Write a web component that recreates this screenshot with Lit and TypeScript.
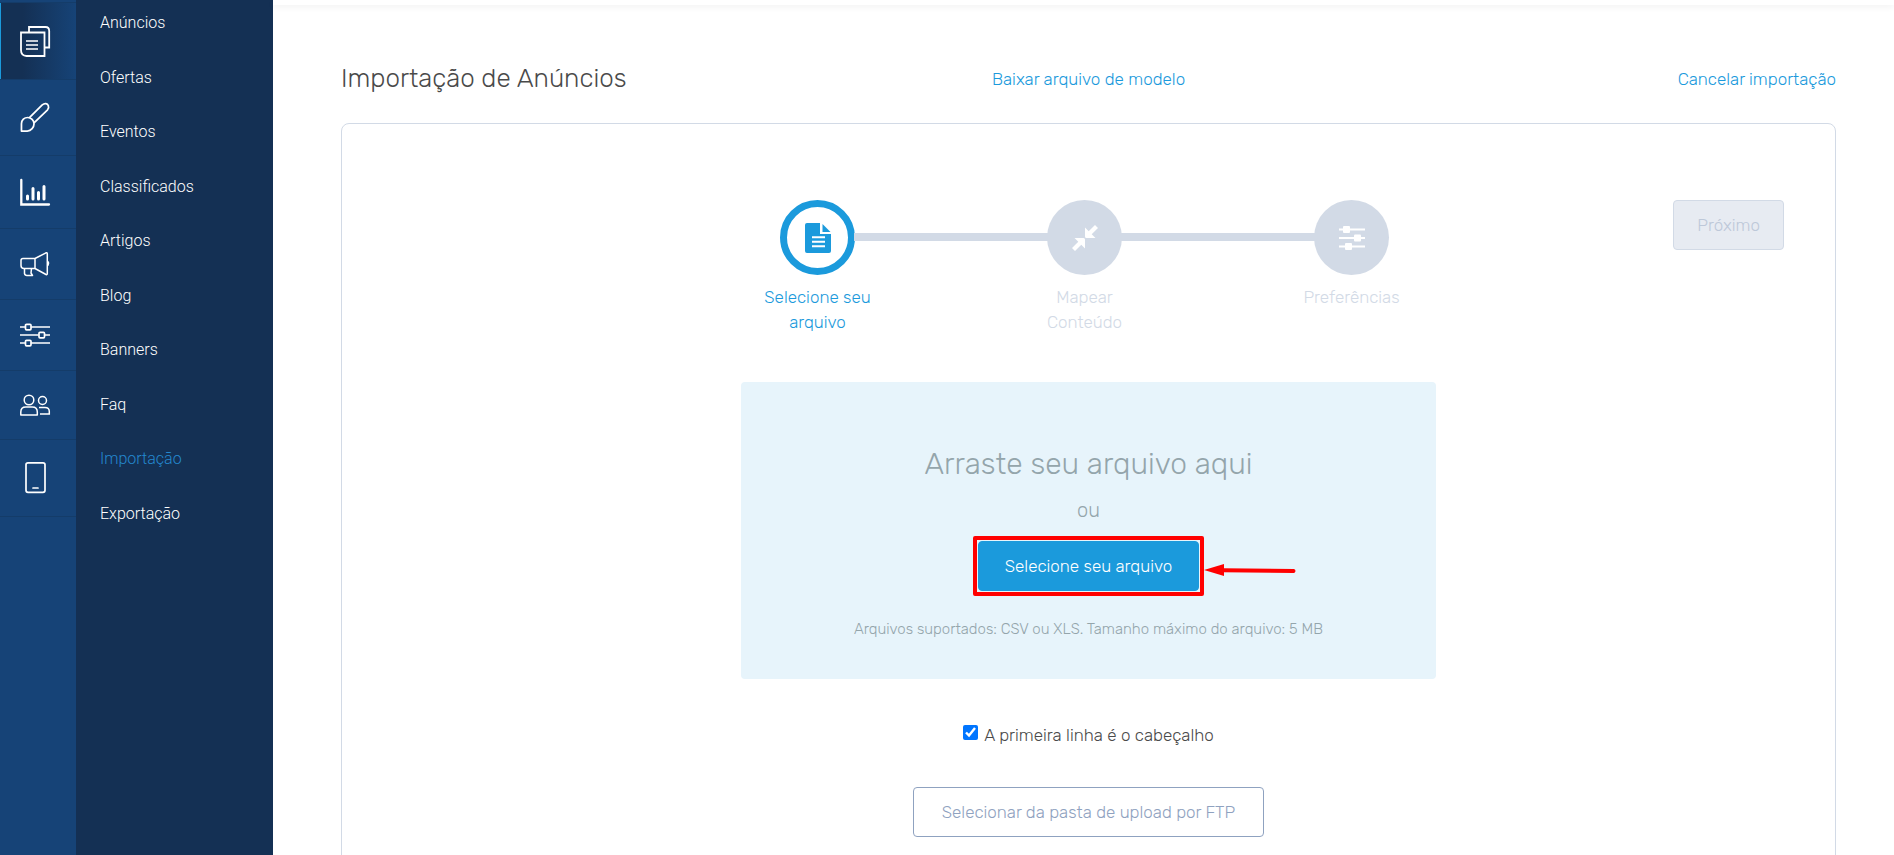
import { LitElement, html, css, svg, nothing } from "lit";
import { customElement, state } from "lit/decorators.js";

const icons = {
  content: svg`<svg width="30" height="30" viewBox="0 0 30 30" fill="none" stroke="currentColor" stroke-width="1.8">
    <path d="M1 6.5h23.500v23.500H6.500Q1 30 1 24z"/><path d="M9 6.500V1h16.500Q29.200 1 29.200 5v16.500h-5" />
    <path d="M6 15h12M6 19h12M6 23h12" stroke-width="1.500"/></svg>`,
  design: svg`<svg width="30" height="29" viewBox="0 0 30 30" fill="none" stroke="currentColor" stroke-width="1.8" stroke-linejoin="round">
    <path d="M1 29v-7.500C1 17.500 4 15 7.500 15S14 18 14 21.500 11 29 7 29z"/>
    <path d="M9 15.500 22.500 2C25 -.2 28 .5 28.700 2.500c.8 2 .2 3.500-.7 4.500L14 20.500"/></svg>`,
  stats: svg`<svg width="30" height="26" viewBox="0 0 30 26" fill="none" stroke="currentColor" stroke-linecap="round">
    <path d="M1.300 1v24.500H29" stroke-width="2.300"/><path d="M7.500 17v3M13 9.500v10.500M18.500 13.500v6.500M24 7.500v12.500" stroke-width="3"/></svg>`,
  promote: svg`<svg width="30" height="24" viewBox="0 0 30 24" fill="none" stroke="currentColor" stroke-width="1.500" stroke-linejoin="round">
    <path d="M15 6.500H3Q1 6.500 1 8.500v5Q1 16.500 4 16.500h11zM15 6.500 26 .8Q27.300.3 27.300 2v19.500q0 1.500-1.300 1L15 16.500"/>
    <path d="M4.500 17v4.500q.5 2.500 3 2h5l-1.500-2.500.5-4.500M28 9.500q1.500 2 0 4"/></svg>`,
  settings: svg`<svg width="30" height="24" viewBox="0 0 30 24" fill="none" stroke="currentColor" stroke-width="1.700">
    <path d="M0 4h5M11 4h19M0 12h18.500M24.500 12H30M0 20h5M11 20h19"/>
    <rect x="5.500" y="1.300" width="5.500" height="5.500" rx="1"/><rect x="19" y="9.300" width="5.500" height="5.500" rx="1"/><rect x="5.500" y="17.300" width="5.500" height="5.500" rx="1"/></svg>`,
  users: svg`<svg width="30" height="22" viewBox="0 0 30 22" fill="none" stroke="currentColor" stroke-width="1.500">
    <circle cx="9" cy="6" r="4.800"/><path d="M.8 21v-3q0-5 5-5h6.500q5 0 5 5v3z" stroke-linejoin="round"/>
    <circle cx="22.500" cy="6.500" r="4"/><path d="M19 13.500h6q4.300 0 4.300 4V20H20"/></svg>`,
  mobile: svg`<svg width="30" height="30" viewBox="0 0 30 30" fill="none" stroke="currentColor" stroke-width="1.700">
    <rect x="6" y="-.2" width="19" height="29.500" rx="2"/><path d="M13 25h5" stroke-linecap="round"/></svg>`,
  file: svg`<svg width="26" height="30" viewBox="0 0 26 30" fill="currentColor">
    <path d="M2 0h13v11h11v17q0 2-2 2H2q-2 0-2-2V2Q0 0 2 0z"/><path d="M17.500 1 25.500 9h-8z"/>
    <path d="M7 14.200h13M7 18.800h13M7 23.200h13" stroke="#fff" stroke-width="2"/></svg>`,
  merge: svg`<svg width="26" height="26" viewBox="0 0 26 26" fill="currentColor">
    <path d="M13 2.500v9q0 1.500 1.500 1.500h9l-3.800-3.700L26 3 23 0l-6.300 6.300zM13 23.500v-9q0-1.500-1.500-1.500h-9l3.800 3.700L0 23l3 3 6.300-6.300z"/></svg>`,
  preferences: svg`<svg width="26" height="26" viewBox="0 0 26 26" fill="currentColor">
    <path d="M0 3.500h26v2H0zM0 12h26v2H0zM0 20.500h26v2H0z"/><rect x="4" y="1" width="7" height="7" rx="1"/>
    <rect x="15" y="9.500" width="7" height="7" rx="1"/><rect x="6" y="18" width="7" height="7" rx="1"/></svg>`,
};

const sections = [
  { label: "Conteúdo", icon: icons.content },
  { label: "Design", icon: icons.design },
  { label: "Relatórios", icon: icons.stats },
  { label: "Promover", icon: icons.promote },
  { label: "Configurações", icon: icons.settings },
  { label: "Usuários", icon: icons.users },
  { label: "Aplicativo", icon: icons.mobile },
];

const pages = ["Anúncios", "Ofertas", "Eventos", "Classificados", "Artigos", "Blog", "Banners", "Faq", "Importação", "Exportação"];

@customElement("side-nav")
class SideNav extends LitElement {
  static styles = css`
    :host { display: flex; flex: none; font: 300 16px/22px Roboto, sans-serif; }
    a { color: #fff; text-decoration: none; }
    .rail { width: 76px; background: #164377; padding-top: 2px; box-sizing: border-box; }
    .section { display: flex; padding: 23px 20px; border-bottom: 1px solid #143c69; }
    .section:first-child { border-top: 1px solid #143c69; }
    .section.active { background: linear-gradient(90deg, #143054 30%, #164377); box-shadow: inset 1px 0 #1b9adc; }
    .section svg { display: block; overflow: visible; }
    .menu { width: 197px; background: #143054; }
    .pages { display: grid; grid-auto-rows: 1fr; height: 545px; margin: 0; padding: 0; list-style: none; }
    .page { display: block; padding: 12px 24px 0; }
    .page.active { color: #2488cf; }
  `;
  render() {
    return html`
      <nav class="rail" aria-label="Seções">
        ${sections.map((s, i) => html`<a href="#" class="section ${i === 0 ? "active" : ""}" aria-label=${s.label}>${s.icon}</a>`)}
      </nav>
      <nav class="menu" aria-label="Conteúdo">
        <ul class="pages">
          ${pages.map((p) => html`<li><a href="#" class="page ${p === "Importação" ? "active" : ""}"
            aria-current=${p === "Importação" ? "page" : nothing}>${p}</a></li>`)}
        </ul>
      </nav>`;
  }
}

@customElement("import-steps")
class ImportSteps extends LitElement {
  static styles = css`
    :host { display: block; }
    .steps { display: flex; margin: 0; padding: 0; list-style: none; }
    .step { position: relative; width: 267px; display: flex; flex-direction: column; align-items: center; color: #d2dae6; }
    .step + .step::before { content: ""; position: absolute; top: 33px; left: -97px; width: 194px; height: 8px; background: #d2dae6; }
    .disc { display: grid; place-items: center; width: 75px; height: 75px; box-sizing: border-box; border-radius: 50%;
      background: #d2dae6; color: #fff; }
    .label { width: 120px; margin-top: 10px; text-align: center; line-height: 25px; }
    .narrow { width: 90px; }
    .current { color: #1b9adc; }
    .current .disc { border: 7px solid #1b9adc; background: #fff; color: #1b9adc; }
  `;
  render() {
    return html`<ol class="steps">
      <li class="step current" aria-current="step"><span class="disc">${icons.file}</span><span class="label">Selecione seu arquivo</span></li>
      <li class="step"><span class="disc">${icons.merge}</span><span class="label narrow">Mapear Conteúdo</span></li>
      <li class="step"><span class="disc">${icons.preferences}</span><span class="label">Preferências</span></li>
    </ol>`;
  }
}

@customElement("app-root")
class AppRoot extends LitElement {
  static styles = css`
    :host { display: flex; height: 100vh; overflow: hidden; background: #fff; color: #4a4a4a;
      font: 300 17px/25px Rubik, Roboto, sans-serif; }
    a { color: #1b9adc; text-decoration: none; }
    button { font: inherit; height: 50px; padding: 0 26px; border-radius: 4px; border: 1px solid; white-space: nowrap; }
    .main { flex: 1; min-width: 0; }
    .topbar { height: 5px; box-shadow: 0 2px 6px rgba(0, 0, 0, 0.06); }
    .content { padding: 53px 58px 0 68px; }
    .heading { display: grid; grid-template-columns: 1fr auto 1fr; align-items: center; height: 40px; }
    .title { margin: 0; font-size: 26px; font-weight: 300; line-height: 42px; }
    .cancel { justify-self: end; }
    .card { margin-top: 25px; padding: 76px 51px 60px; border: 1px solid #d2dae6; border-radius: 8px;
      display: flex; flex-direction: column; align-items: center; }
    .progress { display: grid; grid-template-columns: 1fr auto 1fr; align-items: start; align-self: stretch; height: 182px; }
    .steps { grid-column: 2; margin-right: 8px; }
    .next { justify-self: end; padding: 0 23px; background: #e7ebf2; border-color: #d2dae6; color: #bdc8d9; }
    .drop { width: 50%; height: 297px; padding-top: 58px; box-sizing: border-box; border-radius: 4px; background: #e7f4fb; color: #94a5ab;
      display: flex; flex-direction: column; align-items: center; }
    .lead { margin: 0; font-size: 30px; font-weight: 300; line-height: 48px; }
    .or { margin: 8px 0 0; font-size: 20px; line-height: 28px; }
    .pick { position: relative; margin-top: 17px; }
    .pick-button { display: block; background: #1b9adc; border-color: #1b9adc; color: #fff; }
    .frame { position: absolute; inset: -5px; border: 4px solid #f00; border-radius: 2px; pointer-events: none; }
    .arrow { position: absolute; left: calc(100% + 5px); top: 22px; pointer-events: none; }
    .hint { margin: 26px 0 0; font-size: 15px; line-height: 24px; }
    .header-row { display: flex; align-items: flex-start; gap: 6px; margin-top: 44px; }
    .tick { width: 15px; height: 15px; margin: 2px 0 0; accent-color: #0075ff; }
    .ftp { margin-top: 39px; padding: 0 28px; background: #fff; border-color: #8fa2c0; color: #8fa2c0; }
  `;

  @state() private firstRowIsHeader = true;

  render() {
    return html`
      <side-nav></side-nav>
      <main class="main">
        <div class="topbar"></div>
        <div class="content">
          <header class="heading">
            <h1 class="title">Importação de Anúncios</h1>
            <a href="#">Baixar arquivo de modelo</a>
            <a href="#" class="cancel">Cancelar importação</a>
          </header>
          <section class="card">
            <div class="progress">
              <import-steps class="steps"></import-steps>
              <button class="next" type="button" disabled>Próximo</button>
            </div>
            <div class="drop">
              <h2 class="lead">Arraste seu arquivo aqui</h2>
              <p class="or">ou</p>
              <div class="pick">
                <button class="pick-button" type="button">Selecione seu arquivo</button>
                <span class="frame"></span>
                <svg class="arrow" width="92" height="16" viewBox="0 0 92 16" fill="#f00">
                  <path d="M0 7 20 1v12z"/><path d="M19 7.300 89.500 7.900" stroke="#f00" stroke-width="4" stroke-linecap="round"/>
                </svg>
              </div>
              <p class="hint">Arquivos suportados: CSV ou XLS. Tamanho máximo do arquivo: 5 MB</p>
            </div>
            <div class="header-row">
              <input id="first-row" class="tick" type="checkbox" .checked=${this.firstRowIsHeader}
                @change=${(e: Event) => (this.firstRowIsHeader = (e.target as HTMLInputElement).checked)} />
              <label for="first-row">A primeira linha é o cabeçalho</label>
            </div>
            <button class="ftp" type="button">Selecionar da pasta de upload por FTP</button>
          </section>
        </div>
      </main>`;
  }
}
